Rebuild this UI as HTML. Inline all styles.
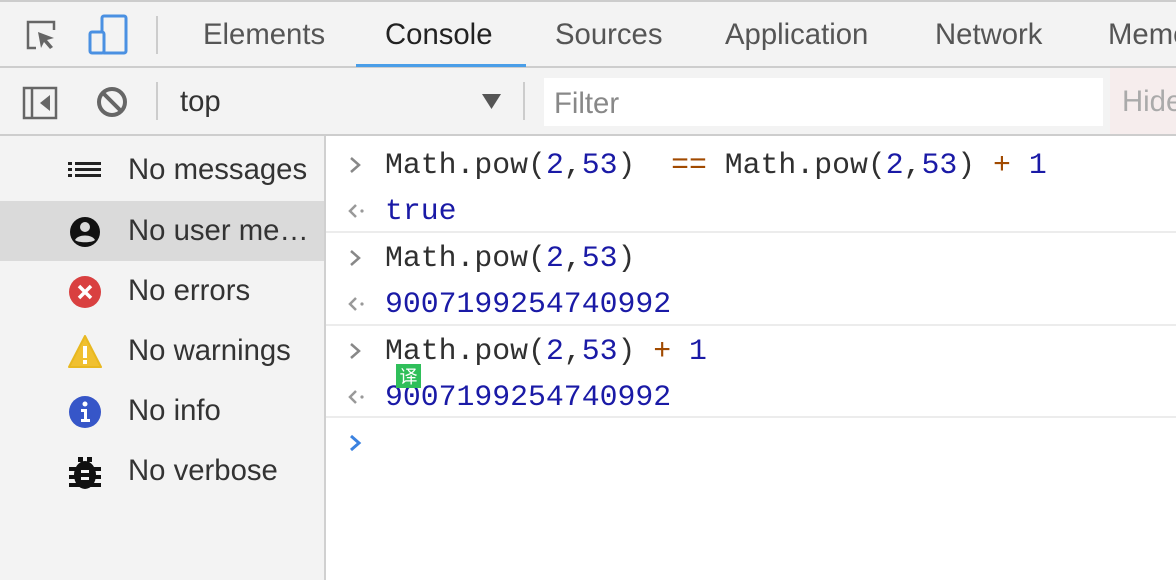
<!DOCTYPE html>
<html><head><meta charset="utf-8"><style>
*{margin:0;padding:0;box-sizing:border-box}
body{width:1176px;height:580px;overflow:hidden;background:#fff;font-family:"Liberation Sans",sans-serif;position:relative}
.bar1{position:absolute;left:0;top:0;width:1176px;height:68px;background:#f3f3f3;border-top:2px solid #ccc;border-bottom:2px solid #cdcdcd}
.bar2{position:absolute;left:0;top:68px;width:1176px;height:68px;background:#f3f3f3;border-bottom:2px solid #cdcdcd}
.t{position:absolute;font-size:29.3px;color:#555;top:16px}
.side{position:absolute;left:0;top:136px;width:326px;height:444px;background:#f3f3f3;border-right:2px solid #d0d0d0}
.row{position:absolute;left:0;width:324px;height:60px}
.row span{position:absolute;left:128px;top:13px;font-size:29.3px;color:#333;white-space:nowrap}
.row svg{position:absolute;left:67px;top:14px}
.m{position:absolute;font-family:"Liberation Mono",monospace;font-size:29.8px;left:385px;color:#303030;white-space:pre}
.b{color:#1a1aa6}.o{color:#a14a00}
.ar{position:absolute;left:348px}
.sep{position:absolute;left:326px;width:850px;height:2px;background:#ececec}
</style></head><body>
<div class="bar1">
<svg style="position:absolute;left:24px;top:16px" width="36" height="36" viewBox="0 0 36 36"><path d="M12 30H4V4h26v8" fill="none" stroke="#666" stroke-width="2.5"/><path d="M14 14l16 6-7 2 6 7-3 2-6-7-3 6z" fill="#666"/></svg>
<svg style="position:absolute;left:88px;top:12px" width="42" height="42" viewBox="0 0 42 42"><rect x="14" y="2" width="24" height="37" rx="2" fill="none" stroke="#4a90e2" stroke-width="3"/><rect x="2" y="18" width="14" height="21" rx="2" fill="#f3f3f3" stroke="#4a90e2" stroke-width="3"/></svg>
<div style="position:absolute;left:156px;top:14px;width:2px;height:38px;background:#ccc"></div>
<div class="t" style="left:203px">Elements</div>
<div class="t" style="left:385px;color:#222">Console</div>
<div style="position:absolute;left:356px;top:62px;width:170px;height:3px;background:#4a9ee8"></div>
<div class="t" style="left:555px">Sources</div>
<div class="t" style="left:725px">Application</div>
<div class="t" style="left:935px">Network</div>
<div class="t" style="left:1108px">Memory</div>
</div>
<div class="bar2">
<svg style="position:absolute;left:22px;top:18px" width="40" height="34" viewBox="0 0 40 34"><rect x="2" y="2" width="32" height="30" fill="none" stroke="#666" stroke-width="2.5"/><line x1="10" y1="2" x2="10" y2="32" stroke="#666" stroke-width="2.5"/><path d="M28 9v16l-10-8z" fill="#666"/></svg>
<svg style="position:absolute;left:94px;top:16px" width="36" height="36" viewBox="0 0 36 36"><circle cx="18" cy="18" r="13" fill="none" stroke="#666" stroke-width="4"/><line x1="9" y1="9" x2="27" y2="27" stroke="#666" stroke-width="4"/></svg>
<div style="position:absolute;left:156px;top:14px;width:2px;height:38px;background:#ccc"></div>
<div class="t" style="left:180px;top:17px;color:#333">top</div>
<svg style="position:absolute;left:482px;top:26px" width="20" height="16"><path d="M0 0h19l-9.5 15z" fill="#555"/></svg>
<div style="position:absolute;left:523px;top:14px;width:2px;height:38px;background:#ccc"></div>
<div style="position:absolute;left:544px;top:10px;width:559px;height:48px;background:#fff"></div>
<div class="t" style="left:554px;top:19px;color:#888">Filter</div>
<div style="position:absolute;left:1110px;top:0;width:66px;height:66px;background:#f6eded"></div>
<div class="t" style="left:1122px;top:17px;color:#aaa">Hide</div>
</div>
<div class="side">
<div class="row" style="top:4px"><svg width="36" height="32" viewBox="0 0 36 32"><g fill="#222"><rect x="1" y="8" width="4" height="3"/><rect x="1" y="14" width="4" height="3"/><rect x="1" y="20" width="4" height="3"/><rect x="8" y="8" width="26" height="3"/><rect x="8" y="14" width="26" height="3"/><rect x="8" y="20" width="26" height="3"/></g></svg><span>No messages</span></div>
<div class="row" style="top:65px;background:#dadada"><svg width="36" height="34" viewBox="0 0 36 34"><circle cx="18" cy="17" r="15" fill="#111"/><circle cx="18" cy="12" r="5" fill="#dadada"/><path d="M8 25c3-6 17-6 20 0c-3 3-17 3-20 0z" fill="#dadada"/></svg><span>No user me…</span></div>
<div class="row" style="top:125px"><svg width="36" height="34" viewBox="0 0 36 34"><circle cx="18" cy="17" r="16" fill="#d94040"/><path d="M12 11l12 12M24 11l-12 12" stroke="#fff" stroke-width="3.5"/></svg><span>No errors</span></div>
<div class="row" style="top:185px"><svg width="36" height="34" viewBox="0 0 36 34"><path d="M18 1L34 32H2z" fill="#f0c030" stroke="#e8b820" stroke-linejoin="round" stroke-width="2"/><rect x="16" y="11" width="4" height="12" fill="#fff"/><rect x="16" y="25" width="4" height="4" fill="#fff"/></svg><span>No warnings</span></div>
<div class="row" style="top:245px"><svg width="36" height="34" viewBox="0 0 36 34"><circle cx="18" cy="17" r="16" fill="#3656c8"/><circle cx="18" cy="9" r="2.5" fill="#fff"/><path d="M14 14h6v10h3v3h-9v-3h3v-7h-3z" fill="#fff"/></svg><span>No info</span></div>
<div class="row" style="top:305px"><svg width="36" height="36" viewBox="0 0 36 36"><g fill="#111"><ellipse cx="18" cy="20" rx="11" ry="14"/><rect x="11" y="2" width="5" height="5"/><rect x="20" y="2" width="5" height="5"/><rect x="2" y="12" width="32" height="4"/><rect x="2" y="20" width="32" height="4"/><rect x="2" y="28" width="32" height="4"/></g><rect x="14" y="15" width="8" height="3" fill="#f3f3f3"/><rect x="14" y="22" width="8" height="3" fill="#f3f3f3"/></svg><span>No verbose</span></div>
</div>
<svg class="ar" style="top:156px" width="14" height="18"><path d="M3 2l8 7-8 7" fill="none" stroke="#888" stroke-width="2.5"/></svg>
<div class="m" style="top:148px">Math.pow(<span class="b">2</span>,<span class="b">53</span>)  <span class="o">==</span> Math.pow(<span class="b">2</span>,<span class="b">53</span>) <span class="o">+</span> <span class="b">1</span></div>
<svg class="ar" style="top:203px" width="18" height="16"><path d="M8 2l-6 6 6 6" fill="none" stroke="#999" stroke-width="2.5"/><circle cx="14" cy="8" r="1.6" fill="#999"/></svg>
<div class="m b" style="top:194px">true</div>
<div class="sep" style="top:231px"></div>
<svg class="ar" style="top:249px" width="14" height="18"><path d="M3 2l8 7-8 7" fill="none" stroke="#888" stroke-width="2.5"/></svg>
<div class="m" style="top:241px">Math.pow(<span class="b">2</span>,<span class="b">53</span>)</div>
<svg class="ar" style="top:296px" width="18" height="16"><path d="M8 2l-6 6 6 6" fill="none" stroke="#999" stroke-width="2.5"/><circle cx="14" cy="8" r="1.6" fill="#999"/></svg>
<div class="m b" style="top:287px">9007199254740992</div>
<div class="sep" style="top:324px"></div>
<svg class="ar" style="top:342px" width="14" height="18"><path d="M3 2l8 7-8 7" fill="none" stroke="#888" stroke-width="2.5"/></svg>
<div class="m" style="top:334px">Math.pow(<span class="b">2</span>,<span class="b">53</span>) <span class="o">+</span> <span class="b">1</span></div>
<svg class="ar" style="top:389px" width="18" height="16"><path d="M8 2l-6 6 6 6" fill="none" stroke="#999" stroke-width="2.5"/><circle cx="14" cy="8" r="1.6" fill="#999"/></svg>
<div class="m b" style="top:380px">9007199254740992</div>
<div style="position:absolute;left:396px;top:364px;width:25px;height:24px;background:#2fbf5a;color:#fff;font-family:'Noto Sans CJK SC',sans-serif;font-size:18px;line-height:24px;text-align:center">译</div>
<div class="sep" style="top:416px"></div>
<svg class="ar" style="top:434px" width="14" height="18"><path d="M3 2l8 7-8 7" fill="none" stroke="#3b82e0" stroke-width="3"/></svg>
</body></html>
